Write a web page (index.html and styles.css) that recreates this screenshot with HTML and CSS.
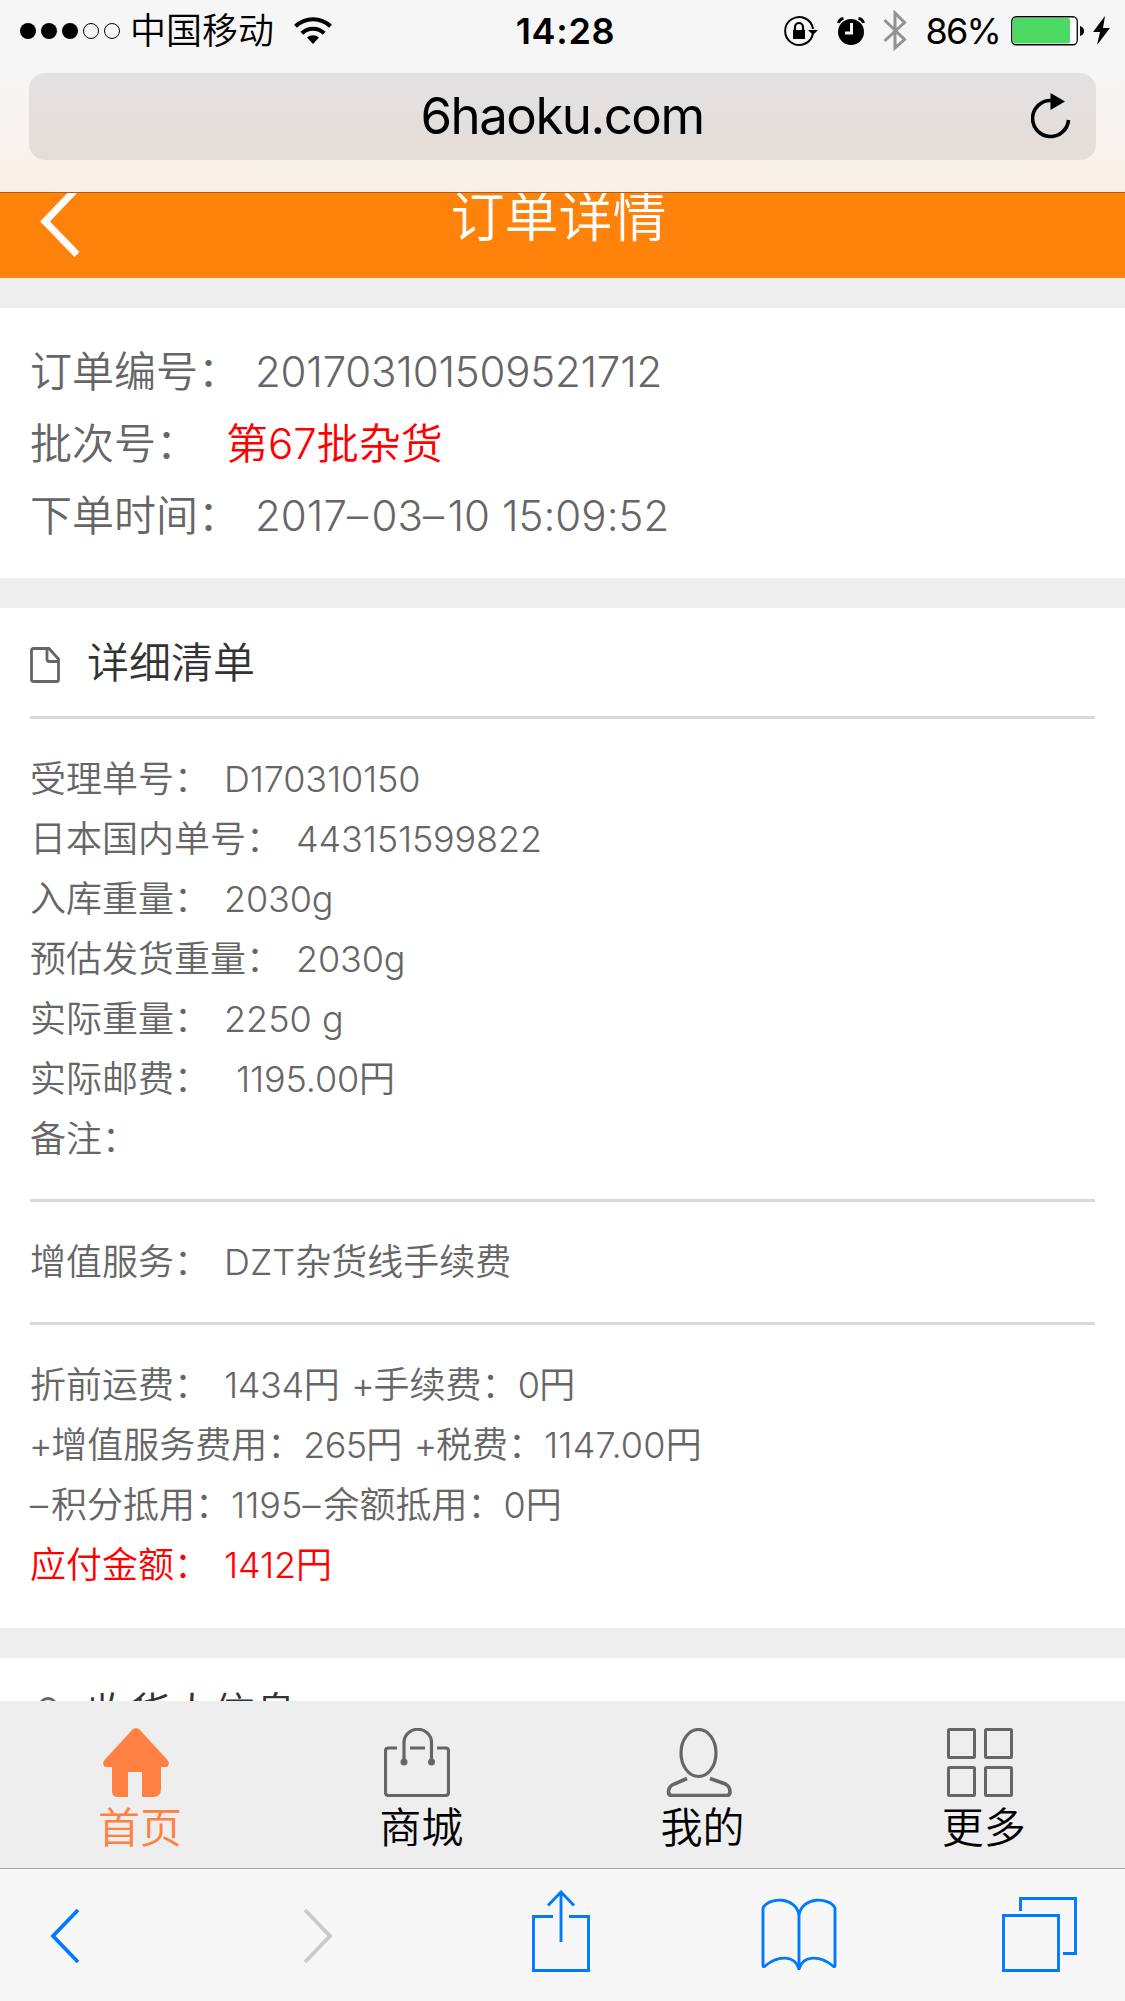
FILE: index.html
```html
<!DOCTYPE html>
<html lang="zh-CN">
<head>
<meta charset="utf-8">
<title>订单详情</title>
<link rel="stylesheet" href="styles.css">
</head>
<body>
<div class="phone">
  <header class="chrome-top">
    <div class="status">
      <div class="status-left">
        <svg class="signal" width="102" height="18" viewBox="0 0 102 18"><g fill="#000"><circle cx="9" cy="9" r="8"/><circle cx="30" cy="9" r="8"/><circle cx="51" cy="9" r="8"/></g><g fill="none" stroke="#000"><circle cx="72" cy="9" r="7.5"/><circle cx="93" cy="9" r="7.5"/></g></svg>
        <span class="carrier">中国移动</span>
        <svg class="wifi" width="38" height="28" viewBox="0 0 38 28"><path d="M1.500 9.300A25 25 0 0 1 36.500 9.300M7.800 16.200A16 16 0 0 1 30.200 16.200" fill="none" stroke="#000" stroke-width="4"/><path d="M19 27l-6-6.500a9 9 0 0 1 12 0z"/></svg>
      </div>
      <span class="clock">14:28</span>
      <div class="status-right">
        <svg class="lock" width="36" height="32" viewBox="0 0 36 32"><path d="M30 18A14 14 0 1 1 30 14M27.500 24.500A14 14 0 0 1 20 29.500" fill="none" stroke="#000" stroke-width="2"/><path d="M25 15h10l-5 5zM10 15h12v9H10z"/><path d="M12 16v-4a4 4 0 0 1 8 0v4" fill="none" stroke="#000" stroke-width="2.200"/></svg>
        <svg class="alarm" width="28" height="28" viewBox="0 0 28 28"><circle cx="14" cy="15" r="13"/><path d="M1.500 6q1-4 5-4.500M26.500 6q-1-4-5-4.500" fill="none" stroke="#000" stroke-width="3"/><path d="M14.500 6v10H8" fill="none" stroke="#f6f6f6" stroke-width="3"/></svg>
        <svg class="bt" width="24" height="42" viewBox="0 0 24 42"><path d="M1.500 10L21.500 29.500 12 38V3l9.500 9.500L1.500 31" fill="none" stroke="#929292" stroke-width="3"/></svg>
        <span class="percent">86%</span>
        <svg class="battery" width="74" height="30" viewBox="0 0 74 30"><rect x=".75" y=".75" width="65.500" height="28" rx="4.500" fill="#fff" stroke="#000" stroke-width="1.300"/><rect x="2" y="2" width="57" height="25.500" rx="2" fill="#4cd964"/><path d="M69 10q4 1 4 5t-4 5z"/></svg>
        <svg class="bolt" width="17" height="29" viewBox="0 0 17 29"><path d="M12 0L0 16h7L4 29 17 12h-7z"/></svg>
      </div>
    </div>
    <div class="urlbar">
      <span class="host">6haoku.com</span>
      <svg class="reload" width="40" height="46" viewBox="0 0 40 46"><path d="M37.500 27A18 18 0 1 1 20 7.500" fill="none" stroke="#000" stroke-width="3.600"/><path d="M19.500 0v17L34 8.500z"/></svg>
    </div>
  </header>

  <main class="viewport">
    <div class="page">
      <div class="titlebar">
        <svg class="back" width="42" height="76" viewBox="0 0 42 76"><path d="M38.500 3.500L6 37.500l32 33" fill="none" stroke="#fff" stroke-width="7" stroke-linejoin="miter"/></svg>
        <h1 class="title">订单详情</h1>
      </div>

      <section class="card order">
        <div class="row"><span>订单编号：</span><span class="val serial">201703101509521712</span></div>
        <div class="row"><span>批次号：</span><span class="val batch">第67批杂货</span></div>
        <div class="row"><span>下单时间：</span><span class="val stamp">2017<span class="dash">–</span>03<span class="dash">–</span>10 15:09:52</span></div>
      </section>

      <section class="card">
        <div class="card-head">
          <svg class="ico" width="30" height="36" viewBox="0 0 30 36"><path d="M3.500 1.500H19L28.500 12v20.500q0 2-2 2h-23q-2 0-2-2v-29q0-2 2-2zM17 1.500V12q0 2.500 2.500 2.500h9" fill="none" stroke="#666" stroke-width="2.800"/></svg>
          <h2>详细清单</h2>
        </div>
        <div class="group">
          <div class="row"><span>受理单号：</span><span class="val num">D170310150</span></div>
          <div class="row"><span>日本国内单号：</span><span class="val num">443151599822</span></div>
          <div class="row"><span>入库重量：</span><span class="val num">2030g</span></div>
          <div class="row"><span>预估发货重量：</span><span class="val num">2030g</span></div>
          <div class="row"><span>实际重量：</span><span class="val">2250 g</span></div>
          <div class="row"><span>实际邮费：</span><span class="val num postage">1195.00円</span></div>
          <div class="row"><span>备注：</span></div>
        </div>
        <div class="group">
          <div class="row"><span>增值服务：</span><span class="val">DZT杂货线手续费</span></div>
        </div>
        <div class="group">
          <div class="row"><span>折前运费：</span><span class="val fee">1434円</span><span class="plus"><span class="sign">+</span>手续费：</span><span class="amt">0円</span></div>
          <div class="row"><span><span class="sign">+</span>增值服务费用：</span><span class="amt">265円</span><span class="plus"><span class="sign">+</span>税费：</span><span class="tax">1147.00円</span></div>
          <div class="row"><span><span class="dash">–</span>积分抵用：</span><span>1195<span class="dash">–</span>余额抵用：</span><span>0円</span></div>
          <div class="row due"><span>应付金额：</span><span class="val num">1412円</span></div>
        </div>
      </section>

      <section class="card">
        <div class="card-head">
          <svg class="ico" width="30" height="36" viewBox="0 0 30 36"><circle cx="18" cy="10" r="8.500" fill="none" stroke="#666" stroke-width="2.800"/><path d="M2 34q0-12 13-14 13 2 13 14z" fill="none" stroke="#666" stroke-width="2.800"/></svg>
          <h2>收货人信息</h2>
        </div>
      </section>
    </div>
  </main>

  <nav class="tabs">
    <a class="tab active">
      <svg width="66" height="69" viewBox="0 0 66 69"><path d="M29.500 1.500q3.500-3 7 0L64.500 32q3 4-.5 7h-6v22q0 8-8 8H39V44H25v25H15q-6 0-6-6V39H2q-3.500-3-.5-7z" fill="#ff8040"/></svg>
      <span>首页</span>
    </a>
    <a class="tab">
      <svg width="66" height="69" viewBox="0 0 66 69" fill="none" stroke="#666" stroke-width="3.200"><path d="M13 20H4.500q-3 0-3 3v41.500q0 3 3 3h57q3 0 3-3V23q0-3-3-3H53M26 20h15M20 34V14.500a13.500 13 0 0 1 27.500 0V34"/><circle cx="20" cy="34" r="3.500" fill="#666" stroke="none"/><circle cx="47.500" cy="34" r="3.500" fill="#666" stroke="none"/></svg>
      <span>商城</span>
    </a>
    <a class="tab">
      <svg width="66" height="69" viewBox="0 0 66 69" fill="none" stroke="#666" stroke-width="3.200"><ellipse cx="32.500" cy="25" rx="17.500" ry="23.500"/><path d="M21 50.500L7 56.500q-4.500 2.500-4.500 7.500 0 3.500 3.500 3.500h54.500q3.500 0 3.500-3.500 0-5.500-4.500-8L44 50.500" stroke-width="3.600"/></svg>
      <span>我的</span>
    </a>
    <a class="tab">
      <svg width="66" height="69" viewBox="0 0 66 69" fill="none" stroke="#666" stroke-width="3"><rect x="1.500" y="1.500" width="26" height="28" rx="1"/><rect x="38.500" y="1.500" width="26" height="28" rx="1"/><rect x="1.500" y="39.500" width="26" height="28" rx="1"/><rect x="38.500" y="39.500" width="26" height="28" rx="1"/></svg>
      <span>更多</span>
    </a>
  </nav>

  <footer class="toolbar">
    <svg class="t-back" width="30" height="56" viewBox="0 0 30 56"><path d="M28 2L3 28l25 26" fill="none" stroke="#007aff" stroke-width="3.800"/></svg>
    <svg class="t-next" width="30" height="56" viewBox="0 0 30 56"><path d="M2 2L27 28 2 54" fill="none" stroke="#cacaca" stroke-width="3.800"/></svg>
    <svg class="t-share" width="60" height="82" viewBox="0 0 60 82"><path d="M22 26.500H2.500v54h55v-54H38M30 52V3M17 15.500L30 2l13 13.500" fill="none" stroke="#007aff" stroke-width="2.900"/></svg>
    <svg class="t-book" width="76" height="74" viewBox="0 0 76 74"><path d="M38 72V17C35-2 7-1 2 10v57.500q0 2 2 .5C17 57 34 57 38 71M38 17C41-2 69-1 74 10v57.500q0 2-2 .5C59 57 42 57 38 71" fill="none" stroke="#007aff" stroke-width="2.900"/></svg>
    <svg class="t-tabs" width="76" height="76" viewBox="0 0 76 76"><path d="M1.500 18.500h55v55h-55zM18.500 14V1.500h55v55h-12.500" fill="none" stroke="#007aff" stroke-width="2.900"/></svg>
  </footer>
</div>
</body>
</html>
```
FILE: styles.css
```css
* { box-sizing: border-box; }

body {
  margin: 0;
  font-family: Inter, "Noto Sans CJK SC", sans-serif;
  font-weight: 350;
}

h1, h2 { margin: 0; font-weight: 350; }
svg { display: block; flex: none; }

.phone {
  width: 1125px;
  height: 2001px;
  display: flex;
  flex-direction: column;
  overflow: hidden;
  background: #eee;
}

/* Browser chrome, top */
.chrome-top {
  flex: none;
  height: 193px;
  border-bottom: 1px solid #b25c08;
  background: linear-gradient(#f6f6f6 0, #f6f6f6 70px, #f8f4ef 140px, #f9efe6 192px);
}

.status {
  height: 73px;
  padding: 0 15px 12px 19px;
  display: grid;
  grid-template-columns: 1fr auto 1fr;
  align-items: center;
  color: #000;
}

.status-left, .status-right { display: flex; align-items: center; }
.status-right { justify-content: flex-end; }
.carrier { margin: 1px 0 0 9px; font-size: 36px; line-height: 60px; }
.wifi { margin-left: 20px; }
.clock { padding: 0 0 0 2px; font-size: 36px; font-weight: 600; line-height: 60px; letter-spacing: .7px; }
.alarm { margin-left: 18px; }
.bt { margin-left: 18px; }
.percent { margin: 0 0 0 18px; font-size: 36px; font-weight: 400; line-height: 60px; letter-spacing: -1.8px; }
.battery { margin-left: 11px; }
.bolt { margin-left: 8px; }

.urlbar {
  height: 87px;
  margin: 0 29px;
  padding: 0 25px 0 40px;
  border-radius: 16px;
  background: linear-gradient(#e3e1e3, #e3e0de 35%, #e5dcd6);
  display: flex;
  align-items: center;
}

.host {
  flex: 1;
  padding-left: 24px;
  padding-bottom: 2px;
  text-align: center;
  font-size: 51px;
  font-weight: 400;
  letter-spacing: -1.5px;
  color: #000;
}

.reload { margin-bottom: 2px; }

/* Web page */
.viewport { height: 1508px; flex: none; overflow: hidden; }
.page { margin-top: -47px; }

.titlebar {
  height: 132px;
  padding: 0 39px;
  display: flex;
  align-items: center;
  background: #ff830a;
  color: #fff;
}

.back { margin-top: 20px; }

.title {
  flex: 1;
  margin: 12px 50px 0 0;
  text-align: center;
  font-size: 54px;
  line-height: 80px;
}

.card { margin-top: 30px; padding: 0 30px; background: #fff; color: #666; }
.card + .card { min-height: 60px; }

.row { display: flex; white-space: pre; font-size: 36px; line-height: 60px; }
.val { margin-left: 14px; }
.num { letter-spacing: -.15px; }
.fee { letter-spacing: -.4px; }
.postage { margin-left: 26px; }
.plus { margin-left: 13px; }
.amt { letter-spacing: -.7px; }
.tax { letter-spacing: .2px; }
.sign { margin-left: -1px; letter-spacing: -1.2px; }
.dash { letter-spacing: 3px; }

.order { padding-top: 28px; padding-bottom: 26px; }
.order .row { font-size: 42px; line-height: 72px; }
.order .val { margin-left: 15px; letter-spacing: -.2px; }
.order .stamp { letter-spacing: .05px; }
.order .dash { letter-spacing: 3.5px; }
.order .batch { margin-left: 28px; letter-spacing: 0; color: #f00; }

.card-head { height: 108px; display: flex; align-items: center; }
.card-head .ico { margin-top: 6px; }
.card-head h2 { margin: 2px 0 0 27px; font-size: 42px; line-height: 60px; color: #333; }

.group { padding: 30px 0 30px; border-top: 3px solid #d9d9d9; }
.group:last-child { padding-bottom: 33px; }
.due { color: #f00; }

/* Site navigation */
.tabs {
  flex: none;
  height: 167px;
  padding-top: 27px;
  display: grid;
  grid-template-columns: repeat(4, 1fr);
  background: #eee;
}

.tab { display: flex; flex-direction: column; align-items: center; color: #000; }
.tab svg { margin-right: 9px; }
.tab span { margin: 1px 1px 0 0; font-size: 42px; line-height: 60px; }
.tab.active { color: #ff8040; }

/* Browser chrome, bottom */
.toolbar {
  flex: none;
  height: 133px;
  padding: 0 46px 0 50px;
  border-top: 1px solid #a5a5a5;
  background: #f7f7f7;
  display: flex;
  align-items: flex-start;
}

.t-back { margin-top: 39px; }
.t-next { margin: 39px 0 0 223px; }
.t-share { margin: 21px 0 0 198px; }
.t-book { margin: 29px 0 0 170px; }
.t-tabs { margin: 28px 0 0 165px; }
```
